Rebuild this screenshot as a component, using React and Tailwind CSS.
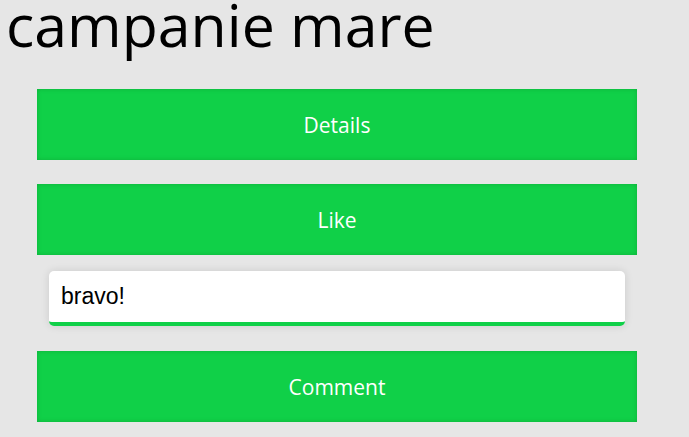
import { useState } from 'react'

const greenBtn =
  "block w-[600px] h-[71px] bg-[#10d048] text-white text-[21px] pt-[2px] font-['Open_Sans',sans-serif] shadow-[inset_0_0_4px_rgba(0,80,20,0.25)]"

export default function App() {
  const [comment, setComment] = useState('bravo!')

  return (
    <div className="min-h-[437px] bg-[#e6e6e6] overflow-hidden">
      <h1 className="-mt-[16px] pl-[6px] text-[59px] leading-[80px] font-['Open_Sans',sans-serif] text-black">
        campanie mare
      </h1>
      <div className="pl-[37px] pt-[25px] flex flex-col">
        <button className={greenBtn}>Details</button>
        <button className={greenBtn + ' mt-[24px] h-[70px]'}>Like</button>
        <div className="mt-[16px] ml-[12px] w-[576px]">
          <input
            type="text"
            value={comment}
            onChange={(e) => setComment(e.target.value)}
            className="block w-full h-[55px] px-[12px] bg-white rounded-[5px] border-b-4 border-[#10d048] shadow-[0_0_8px_rgba(0,0,0,0.12)] text-[23px] font-['Liberation_Sans',sans-serif] text-black outline-none"
          />
        </div>
        <button className={greenBtn + ' mt-[25px] h-[70px]'}>Comment</button>
      </div>
    </div>
  )
}
